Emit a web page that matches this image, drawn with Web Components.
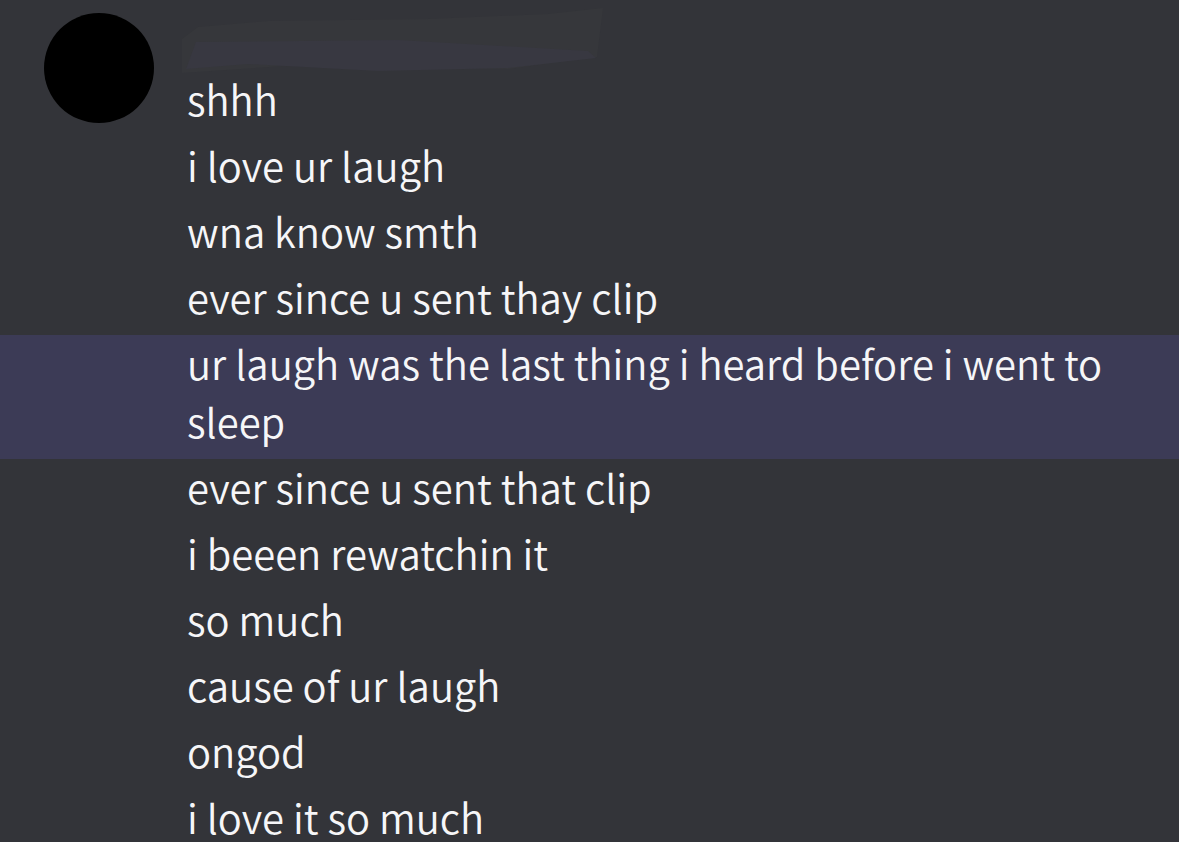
<!DOCTYPE html>
<html lang="en">
<head>
<meta charset="utf-8">
<title>Chat</title>
<style>
    body {
        margin: 0;
        background: #333439;
    }
</style>
</head>
<body>
<template id="chat-avatar">
<style>
    :host {
        display: block;
        flex: none;
        width: 110px;
        height: 110px;
        border-radius: 50%;
        background: #000;
    }
</style>
</template>

<template id="chat-group">
<style>
    :host {
        display: block;
    }
    header {
        display: flex;
        align-items: flex-start;
        gap: 24px;
        box-sizing: border-box;
        height: 71px;
        padding: 13px 44px 0;
    }
    /* the painted-over user name */
    svg {
        display: block;
        flex: none;
        margin-top: -6px;
    }
</style>
<header>
    <chat-avatar></chat-avatar>
    <svg width="430" height="68" viewBox="0 0 430 68" aria-hidden="true">
        <path d="M4 32 20 20 90 14 250 12 370 7 425 1 419 50 330 62 120 58 4 66Z" fill="#36373b"/>
        <path d="M18 35 220 33 410 44 418 51 330 61 200 64 70 57 8 62Z" fill="#383841"/>
    </svg>
</header>
<slot></slot>
</template>

<template id="chat-message">
<style>
    :host {
        display: flow-root;
        padding: 0 44px 0 187px;
        color: #f6f6f8;
        font: 350 40px/58px "Noto Sans CJK SC", "Noto Sans", sans-serif;
    }
    :host([highlighted]) {
        background: #3c3b56;
    }
    /* the font sits low in its line */
    p {
        margin: -1px 0 9px;
    }
</style>
<p><slot></slot></p>
</template>

<template id="chat-log">
<style>
    :host {
        display: block;
        height: 100vh;
        overflow: hidden;
    }
</style>
<slot></slot>
</template>

<chat-log>
    <chat-group>
        <chat-message>shhh</chat-message>
        <chat-message>i love ur laugh</chat-message>
        <chat-message>wna know smth</chat-message>
        <chat-message>ever since u sent thay clip</chat-message>
        <chat-message highlighted>ur laugh was the last thing i heard before i went to sleep</chat-message>
        <chat-message>ever since u sent that clip</chat-message>
        <chat-message>i beeen rewatchin it</chat-message>
        <chat-message>so much</chat-message>
        <chat-message>cause of ur laugh</chat-message>
        <chat-message>ongod</chat-message>
        <chat-message>i love it so much</chat-message>
    </chat-group>
</chat-log>

<script>
    class ChatElement extends HTMLElement {
        constructor() {
            super();
            let shadowRoot = this.attachShadow({mode: 'open'});
            const t = document.querySelector("template#" + this.localName);
            shadowRoot.appendChild(t.content.cloneNode(true));
        }
    }
    class ChatAvatar extends ChatElement {}
    class ChatMessage extends ChatElement {}
    class ChatGroup extends ChatElement {}
    class ChatLog extends ChatElement {}
    customElements.define('chat-avatar', ChatAvatar);
    customElements.define('chat-message', ChatMessage);
    customElements.define('chat-group', ChatGroup);
    customElements.define('chat-log', ChatLog);
</script>
</body>
</html>
